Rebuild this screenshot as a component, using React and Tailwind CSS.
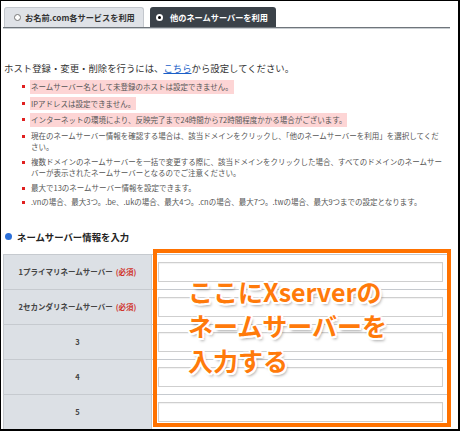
import React from "react";

const notes = [
  { text: "ネームサーバー名として未登録のホストは設定できません。", mark: true },
  { text: "IPアドレスは設定できません。", mark: true },
  { text: "インターネットの環境により、反映完了まで24時間から72時間程度かかる場合がございます。", mark: true },
  { text: "現在のネームサーバー情報を確認する場合は、該当ドメインをクリックし、「他のネームサーバーを利用」を選択してください。" },
  { text: "複数ドメインのネームサーバーを一括で変更する際に、該当ドメインをクリックした場合、すべてのドメインのネームサーバーが表示されたネームサーバーとなるのでご注意ください。" },
  { text: "最大で13のネームサーバー情報を設定できます。" },
  { text: ".vnの場合、最大3つ。.be、.ukの場合、最大4つ。.cnの場合、最大7つ。.twの場合、最大9つまでの設定となります。" },
];

const rows = [
  { label: "1プライマリネームサーバー", required: true },
  { label: "2セカンダリネームサーバー", required: true },
  { label: "3" },
  { label: "4" },
  { label: "5" },
];

const font = "[font-family:'Noto_Sans_CJK_JP','Noto_Sans',sans-serif]";

export default function App() {
  return (
    <div className={`w-[460px] h-[431px] bg-white border-t border-l border-r-2 border-b-2 border-black overflow-hidden ${font}`}>
      {/* tabs */}
      <div className="ml-[2px] w-[447px] mt-[6px]">
        <div className="flex items-end gap-[6px] pl-[1px] border-b border-[#6f757b]">
          <div className="w-[140px] h-[20px] bg-[#dfe2e7] border border-b-0 border-[#c3c7cd] rounded-t-[3px] flex items-center pl-[9px] gap-[4px]">
            <span className="w-[7px] h-[7px] rounded-full bg-white border border-[#777]" />
            <span className="text-[8.2px] font-bold text-[#333] leading-none">お名前.com各サービスを利用</span>
          </div>
          <div className="w-[126px] h-[20px] bg-[#3b4249] rounded-t-[3px] flex items-center pl-[6px] gap-[7px]">
            <span className="w-[7px] h-[7px] rounded-full bg-white flex items-center justify-center">
              <span className="w-[3px] h-[3px] rounded-full bg-black" />
            </span>
            <span className="text-[8.2px] font-bold text-white leading-none">他のネームサーバーを利用</span>
          </div>
        </div>
        <div className="h-[1px] bg-[#c9ced2]" />
      </div>

      <p className="mt-[32px] pl-[3px] text-[9.4px] leading-[14px] text-[#333]">
        ホスト登録・変更・削除を行うには、
        <span className="text-[#1a5fc8] underline">こちら</span>
        から設定してください。
      </p>

      <ul className="mt-[5px] pl-[21px] flex flex-col gap-[3px]">
        {notes.map((n, i) => (
          <li key={i} className="flex items-start">
            <span className="w-[3px] h-[3px] bg-[#e02020] mt-[5px] shrink-0" />
            <span className="ml-[6px] w-[414px] text-[7.5px] leading-[11.5px] text-[#555]">
              {n.mark ? (
                <span className="bg-[#fdd5d5] inline-block py-[1px] px-[1px] -ml-[1px]">{n.text}</span>
              ) : (
                n.text
              )}
            </span>
          </li>
        ))}
      </ul>

      <div className="mt-[22px] pl-[4px] flex items-center gap-[5px]">
        <span className="w-[7px] h-[7px] rounded-full bg-[#2b6fd8]" />
        <span className="text-[9.4px] font-bold leading-[14px] text-[#222]">ネームサーバー情報を入力</span>
      </div>

      <div className="relative mt-[10px] ml-[2px] w-[446px]">
        <div className="border-l border-t border-[#c6cacf]">
          {rows.map((r, i) => (
            <div key={i} className="flex h-[35px] border-b border-[#c6cacf]">
              <div className="w-[148px] bg-[#dce0e5] border-r border-[#c6cacf] flex items-center justify-center text-[7.5px] font-bold text-[#444]">
                {r.label}
                {r.required && <span className="ml-[3px] text-[#d0342c]">(必須)</span>}
              </div>
              <div className="flex-1 flex items-center pl-[6px] pr-[6px]">
                <div className="w-full h-[20px] border border-[#cfcfcf] bg-white shadow-[inset_0_1px_1px_rgba(0,0,0,0.06)]" />
              </div>
            </div>
          ))}
        </div>

        <div className="absolute left-[150px] top-[-5px] w-[298px] h-[178px] border-[4px] border-[#ff7200]" />
        <div className="absolute left-[185px] top-[20px] text-[25px] leading-[34.5px] font-bold text-[#ff7a0a] [text-shadow:2px_0_0_#fff,-2px_0_0_#fff,0_2px_0_#fff,0_-2px_0_#fff,1.5px_1.5px_0_#fff,-1.5px_-1.5px_0_#fff,1.5px_-1.5px_0_#fff,-1.5px_1.5px_0_#fff,2px_3px_3px_rgba(0,0,0,0.35)]">
          <div>ここにXserverの</div>
          <div>ネームサーバーを</div>
          <div>入力する</div>
        </div>
      </div>
    </div>
  );
}
